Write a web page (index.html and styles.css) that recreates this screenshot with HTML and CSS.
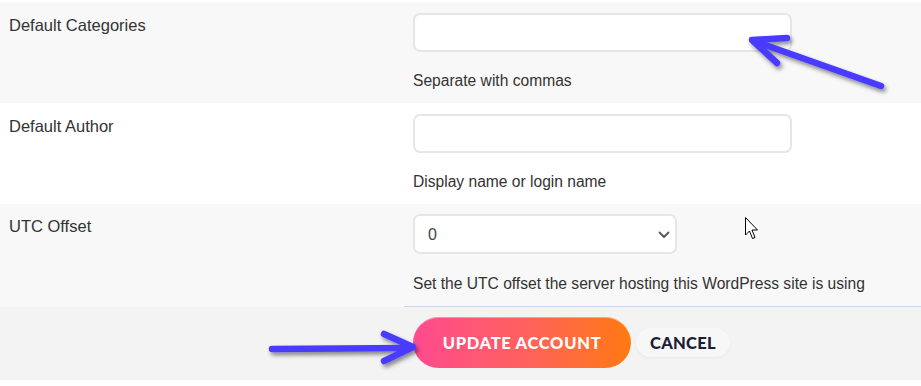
FILE: index.html
```html
<!DOCTYPE html>
<html lang="en">
<head>
<meta charset="utf-8">
<title>Account Settings</title>
<link rel="stylesheet" href="styles.css">
</head>
<body>
<div class="page">
  <div class="row shaded">
    <div class="label">Default Categories</div>
    <div class="field">
      <input class="text-input" type="text">
      <div class="help">Separate with commas</div>
    </div>
  </div>
  <div class="row">
    <div class="label">Default Author</div>
    <div class="field">
      <input class="text-input" type="text">
      <div class="help">Display name or login name</div>
    </div>
  </div>
  <div class="row shaded last">
    <div class="label">UTC Offset</div>
    <div class="field">
      <div class="select-wrap">
        <select class="select"><option>0</option></select>
        <svg class="chevron" width="12" height="8" viewBox="0 0 12 8"><path d="M1.5 1.5 L6 6 L10.5 1.5" fill="none" stroke="#555" stroke-width="1.8" stroke-linecap="round" stroke-linejoin="round"/></svg>
      </div>
      <div class="help">Set the UTC offset the server hosting this WordPress site is using</div>
    </div>
  </div>
  <div class="rule-wrap"><div class="rule"></div></div>
  <div class="footer">
    <button class="btn-primary">UPDATE ACCOUNT</button>
    <button class="btn-cancel">CANCEL</button>
  </div>
</div>

<svg class="overlay" width="921" height="386" viewBox="0 0 921 386">
  <defs>
    <filter id="sh" x="-20%" y="-20%" width="140%" height="160%">
      <feDropShadow dx="2" dy="3" stdDeviation="2" flood-color="#000" flood-opacity="0.45"/>
    </filter>
  </defs>
  <g fill="none" stroke="#4a3bff" stroke-width="6.5" stroke-linecap="round" stroke-linejoin="round" filter="url(#sh)">
    <path d="M881 86 L754 41"/>
    <path d="M787 38 L752 40 L777 63"/>
    <path d="M272 349 L410 348"/>
    <path d="M384 334 L413 347 L384 361"/>
  </g>
  <path class="cursor" d="M745.5 217.5 L745.5 235 L749.5 231 L752.5 238.5 L755 237.5 L752 230 L757.5 230 Z" fill="#fff" stroke="#000" stroke-width="1" stroke-linejoin="miter"/>
</svg>
</body>
</html>
```

FILE: styles.css
```css
html, body {
  margin: 0;
  padding: 0;
  background: #ffffff;
}

body {
  font-family: "Liberation Sans", Arial, sans-serif;
  color: #333333;
  width: 921px;
  height: 386px;
  overflow: hidden;
  position: relative;
}

.page {
  padding-top: 2px;
}

.row {
  display: grid;
  grid-template-columns: 413px 1fr;
  padding: 11px 0 12px 0;
  background: #ffffff;
}

.row.shaded {
  background: #f8f8f8;
}

.row.last {
  padding-top: 10px;
}

.label {
  padding-left: 9px;
  padding-top: 2px;
  font-size: 16.5px;
  line-height: 20px;
  color: #333333;
}

.field {
  display: flex;
  flex-direction: column;
  align-items: flex-start;
}

.text-input {
  box-sizing: border-box;
  width: 379px;
  height: 39px;
  margin: 0;
  border: 2px solid #e6e6e6;
  border-radius: 7px;
  background: #ffffff;
  outline: none;
}

.help {
  margin-top: 19px;
  font-size: 15.6px;
  line-height: 20px;
  color: #333333;
  white-space: nowrap;
}

.row.last .help {
  margin-top: 20px;
}

.select-wrap {
  position: relative;
  width: 264px;
  height: 40px;
}

.select {
  box-sizing: border-box;
  width: 264px;
  height: 40px;
  margin: 0;
  padding: 0 30px 0 13px;
  border: 2px solid #e6e6e6;
  border-radius: 7px;
  background: #ffffff;
  font-family: "Liberation Sans", Arial, sans-serif;
  font-size: 16px;
  color: #444444;
  appearance: none;
  -webkit-appearance: none;
  outline: none;
}

.chevron {
  position: absolute;
  left: 245px;
  top: 17px;
  pointer-events: none;
}

.rule-wrap {
  background: #f8f8f8;
}

.rule {
  margin-left: 404px;
  height: 1px;
  background: #c6d6ee;
}

.footer {
  display: flex;
  align-items: center;
  gap: 5px;
  padding: 10px 0 12px 413px;
  background: #f3f3f3;
}

.btn-primary {
  box-sizing: border-box;
  width: 218px;
  height: 51px;
  border: none;
  border-radius: 26px;
  padding: 0;
  background: linear-gradient(90deg, #ff4a8f 0%, #ff6060 50%, #ff7a12 100%);
  box-shadow: inset 0 1px 0 rgba(255, 255, 255, 0.35);
  color: #ffffff;
  font-family: Lato, "Liberation Sans", sans-serif;
  font-weight: 900;
  font-size: 16.5px;
  letter-spacing: 0.7px;
}

.btn-cancel {
  box-sizing: border-box;
  width: 94px;
  height: 29px;
  border: none;
  border-radius: 15px;
  padding: 0;
  background: #f7f7f7;
  box-shadow: 0 1px 3px rgba(0, 0, 0, 0.05);
  color: #1d1d38;
  font-family: Lato, "Liberation Sans", sans-serif;
  font-weight: 900;
  font-size: 16.5px;
  letter-spacing: 0.3px;
}

.overlay {
  position: absolute;
  left: 0;
  top: 0;
  pointer-events: none;
}
```
